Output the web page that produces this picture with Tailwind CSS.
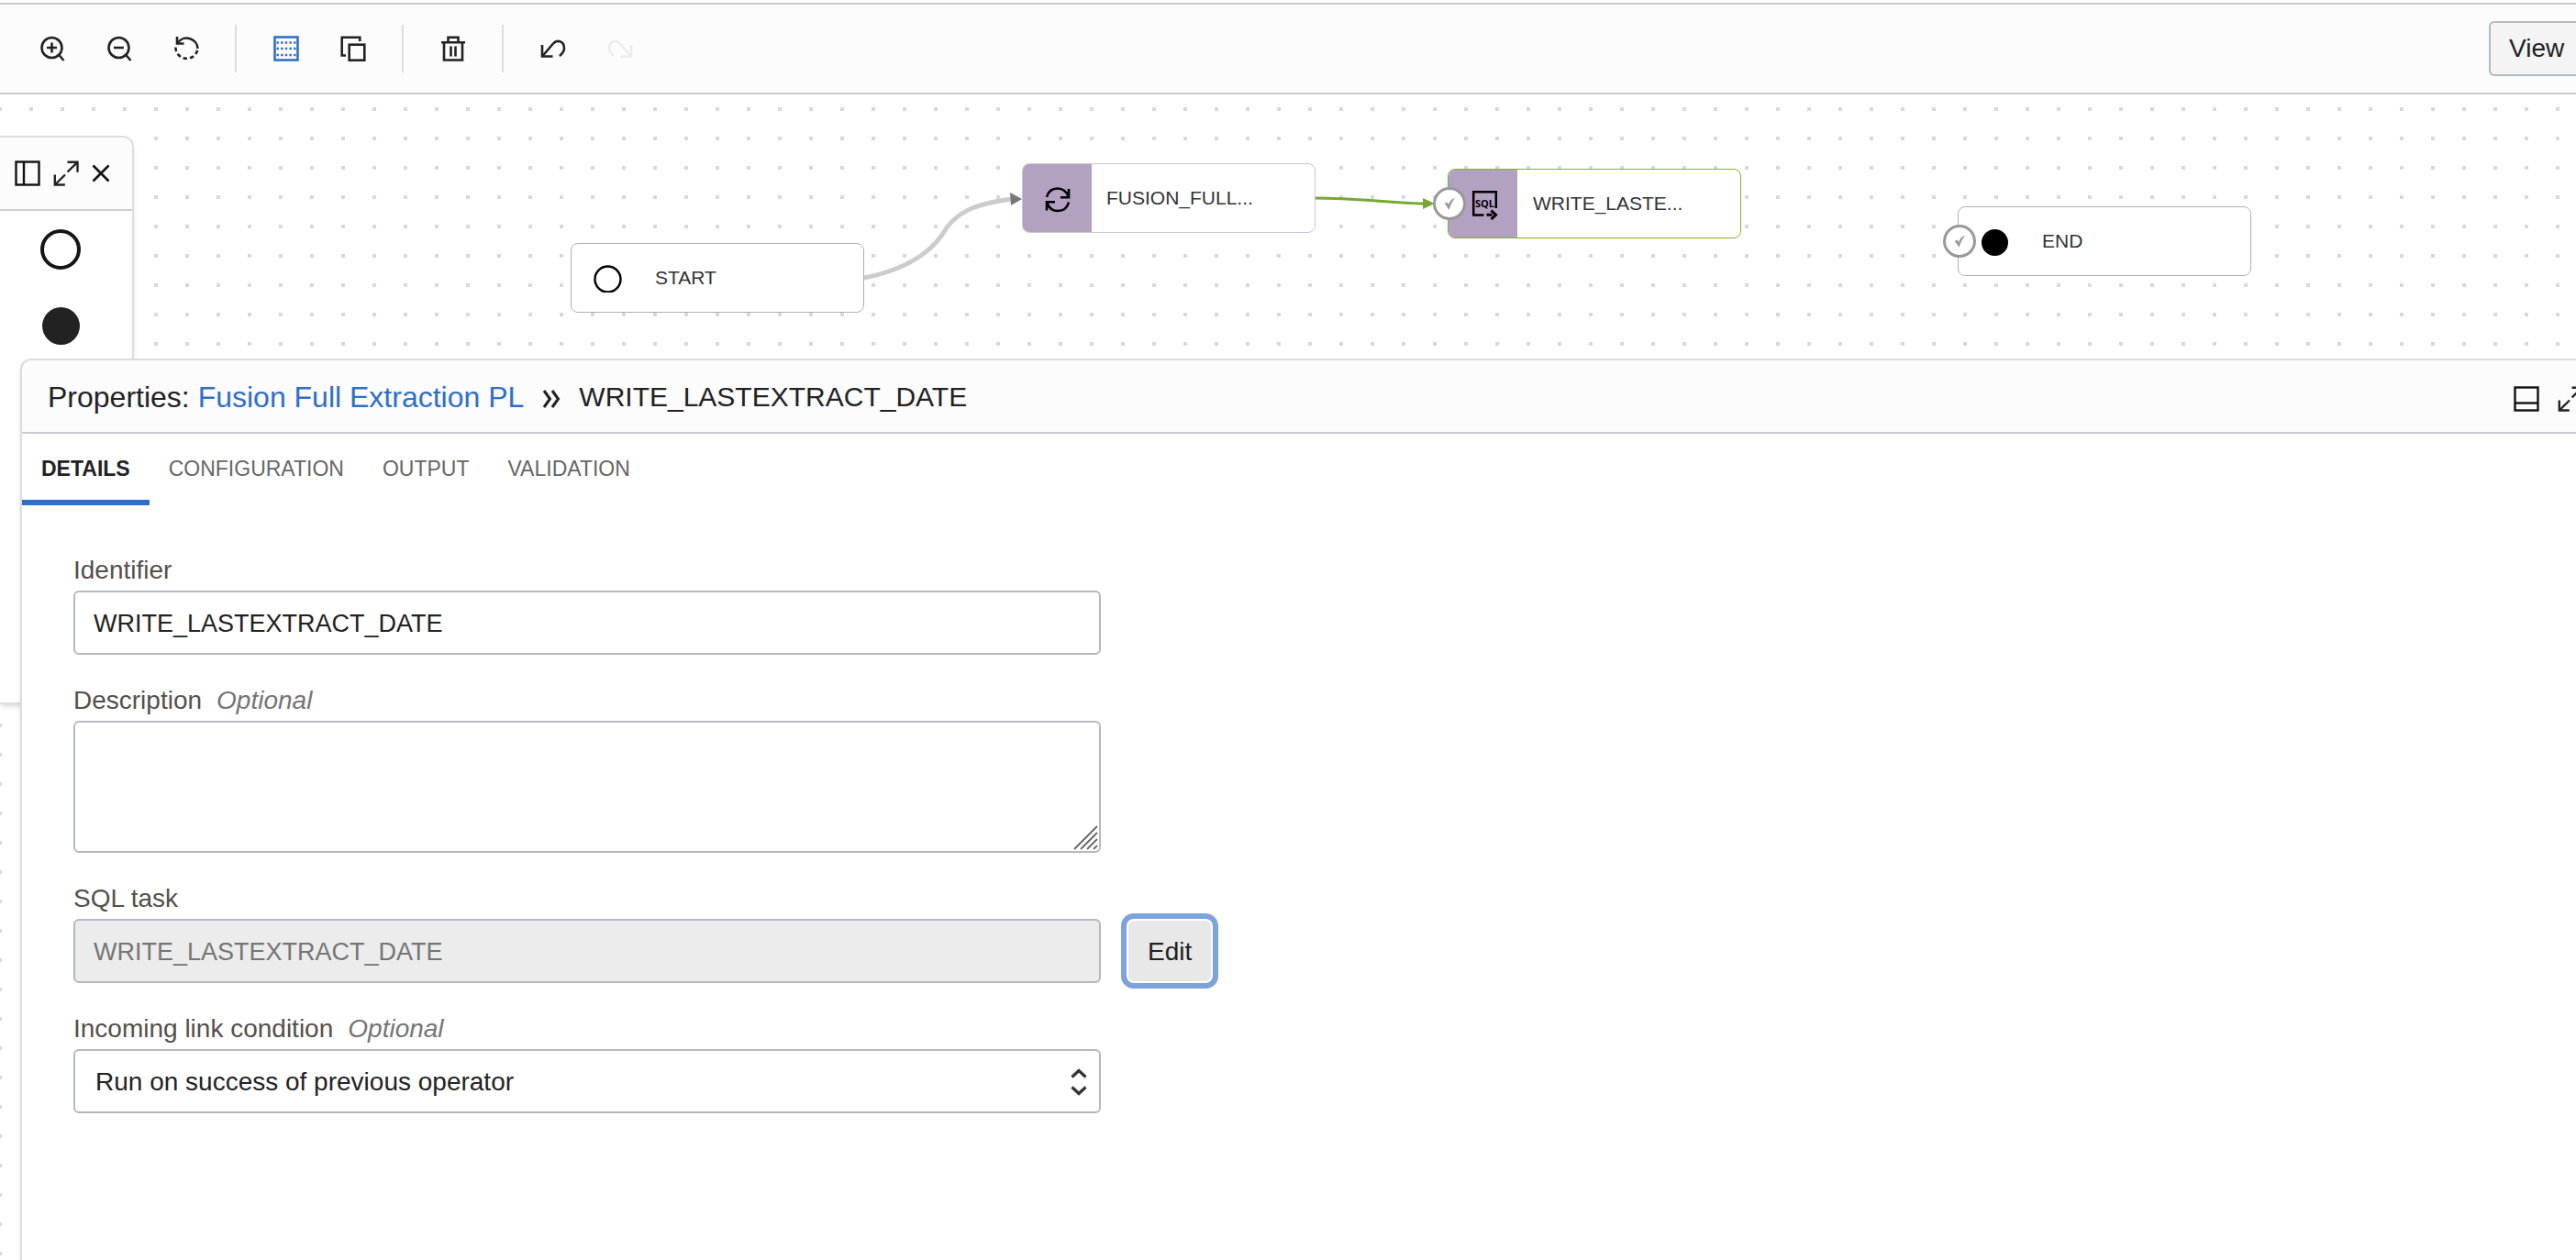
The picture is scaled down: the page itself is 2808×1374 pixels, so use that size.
<!DOCTYPE html>
<html lang="en">
<head>
<meta charset="utf-8">
<meta name="viewport" content="width=device-width, initial-scale=1">
<title>Pipeline designer</title>
<script src="https://cdn.jsdelivr.net/npm/@tailwindcss/browser@4"></script>
</head>
<body class="flex min-h-screen flex-col overflow-x-hidden bg-white pt-[3px] font-['Liberation_Sans',Arial,sans-serif] text-[#222]">

<!-- Toolbar -->
<header class="flex h-[100px] shrink-0 items-center justify-between border-y-2 border-[#ccc] bg-[#fcfcfc] pl-5">
  <div class="flex items-center" role="toolbar" aria-label="Canvas tools">
    <button class="flex w-[73px] justify-center" aria-label="Zoom in">
      <svg class="size-7" viewBox="0 0 28 28" fill="none" stroke="#222" stroke-width="2.6"><circle cx="13.500" cy="13" r="11"/><path d="M13.500 7.500v11M8 13h11M21 20.500l5.500 6.500"/></svg>
    </button>
    <button class="flex w-[73px] justify-center" aria-label="Zoom out">
      <svg class="size-7" viewBox="0 0 28 28" fill="none" stroke="#222" stroke-width="2.6"><circle cx="13.500" cy="13" r="11"/><path d="M8 13h11M21 20.500l5.500 6.500"/></svg>
    </button>
    <button class="flex w-[73px] justify-center" aria-label="Reset zoom">
      <svg class="size-7" viewBox="0 0 28 28" fill="none" stroke="#222" stroke-width="2.6"><path d="M4 1v7.500h7.500"/><path d="M4.500 8A12 12 0 0 1 26.500 14"/><path d="M26.500 14A12 12 0 1 1 2.500 11.500" stroke-dasharray="4.500 3" stroke-dashoffset="-2"/></svg>
    </button>
    <span class="mx-[17px] h-[52px] w-0.5 bg-[#d6dfe6]"></span>
    <button class="flex w-[73px] justify-center" aria-label="Toggle grid" aria-pressed="true">
      <svg class="size-7" viewBox="0 0 28 28" fill="none" stroke="#2f6fca" stroke-width="2.6"><rect x="1.500" y="1.500" width="25" height="25"/><path d="M3.500 7.500h21M3.500 14h21M3.500 21h21" stroke-dasharray="2.400 2.250" stroke-width="2.400"/></svg>
    </button>
    <button class="flex w-[73px] justify-center" aria-label="Duplicate">
      <svg class="size-7" viewBox="0 0 28 28" fill="none" stroke="#222" stroke-width="2.6"><path d="M6 21.500H1.700V1.700h19.600V6"/><rect x="9.700" y="9.700" width="16.600" height="17"/></svg>
    </button>
    <span class="mx-[17px] h-[52px] w-0.5 bg-[#d6dfe6]"></span>
    <button class="flex w-[73px] justify-center" aria-label="Delete">
      <svg class="size-7" viewBox="0 0 28 28" fill="none" stroke="#222" stroke-width="2.6"><path d="M1 7.200h26M8.500 7V1.700h11V7M4 7v19.500h20V7M11.500 11.500v11M16.500 11.500v11"/></svg>
    </button>
    <span class="mx-[17px] h-[52px] w-0.5 bg-[#d6dfe6]"></span>
    <button class="flex w-[73px] justify-center" aria-label="Undo">
      <svg class="size-7" viewBox="0 0 28 28" fill="none" stroke="#222" stroke-width="2.6"><path d="M2 10v12.500h11.500"/><path d="M2.500 22L14 8.500C18 4 26 5.500 26 13.500C26 17 24 19.500 21 22"/></svg>
    </button>
    <button class="flex w-[73px] justify-center" aria-label="Redo" disabled>
      <svg class="size-7" viewBox="0 0 28 28" fill="none" stroke="#ececec" stroke-width="2.6"><path d="M26 10v12.500H14.500"/><path d="M25.500 22L14 8.500C10 4 2 5.500 2 13.500C2 17 4 19.500 7 22"/></svg>
    </button>
  </div>
  <button class="h-[60px] w-[95px] rounded-l-md border-y-2 border-l-2 border-[#b3bac2] bg-[#f4f4f4] pl-5 text-left text-[28px] leading-9">View</button>
</header>

<main class="relative flex flex-1 flex-col overflow-hidden pt-[288px] pl-[22px]">

  <!-- Grid and links -->
  <svg class="absolute inset-0 size-full" fill="none" aria-hidden="true">
    <defs>
      <pattern id="dots" x="-2" y="14" width="34" height="32" patternUnits="userSpaceOnUse"><rect width="4" height="4" fill="#d9d9d9"/></pattern>
    </defs>
    <rect width="100%" height="100%" fill="url(#dots)"/>
    <path d="M942 200C982 192 1010 177 1027 153C1040 129 1062 119 1104 114" stroke="#ccc" stroke-width="5"/>
    <path d="M1101 107l13 7l-12 7z" fill="#777"/>
    <path d="M1434 113C1480 113 1510 118 1554 119" stroke="#76a832" stroke-width="3"/>
    <path d="M1551 113l13 6l-13 6z" fill="#76a832"/>
  </svg>

  <!-- Nodes -->
  <div class="absolute top-[162px] left-[622px] flex h-[76px] w-[320px] items-center rounded-lg border border-[#b0b0b0] bg-white text-[21px] leading-7 text-[#333]">
    <span class="flex w-[91px] pl-6"><svg class="size-8" viewBox="0 0 32 32" fill="none"><circle cx="15.500" cy="17.500" r="14" stroke="#000" stroke-width="2.400"/></svg></span>
    <span>START</span>
  </div>

  <div class="absolute top-[75px] left-[1114px] flex h-[76px] w-[320px] items-center overflow-hidden rounded-lg border border-[#cfc3da] bg-white text-[21px] leading-7 text-[#333]">
    <span class="mr-4 flex h-full w-[75px] items-center justify-center bg-[#b2a1c1]">
      <svg class="size-8" viewBox="0 0 32 32" fill="none" stroke="#000" stroke-width="2.600"><path d="M4 15C5.500 9 10 5.500 16 5.500C21 5.500 25.500 9 27.500 14M28 6v9.300h-9"/><path d="M28 20.500C26.500 26.500 22 30 16 30C11 30 6.500 27 4.500 21.500M4 29.500v-9.300h9"/></svg>
    </span>
    <span>FUSION_FULL...</span>
  </div>

  <div class="absolute top-[81px] left-[1578px] flex h-[76px] w-[320px] items-center rounded-lg border border-[#7fb135] bg-white text-[21px] leading-7 text-[#333]">
    <span class="mr-[17px] flex h-full w-[75px] items-center rounded-l-[7px] bg-[#b2a1c1] pl-[22px]">
      <svg class="size-9" viewBox="0 0 36 36" fill="none"><path d="M16.500 30.500H5.200V5.200h24.600V23" stroke="#000" stroke-width="2.500"/><path d="M19.500 30.300h6M24.500 25.500l5 4.800l-5 4.800" stroke="#000" stroke-width="3"/><text x="17.500" y="21.500" text-anchor="middle" font-family="Open Sans, sans-serif" font-weight="700" font-size="11" fill="#000">SQL</text></svg>
    </span>
    <span>WRITE_LASTE...</span>
    <svg class="absolute top-[19px] -left-[17px] size-9" viewBox="0 0 36 36"><circle cx="18" cy="18" r="16.500" fill="#fff" stroke="#999" stroke-width="3"/><path d="M12.500 18l3-1.500l1.500 2.500C18.500 15 20.500 12.500 24 12c-3 3.500-4.500 7-6.500 13c-1.500-3-3-5-5-7z" fill="#999"/></svg>
  </div>

  <div class="absolute top-[122px] left-[2134px] flex h-[76px] w-[320px] items-center rounded-lg border border-[#b0b0b0] bg-white text-[21px] leading-7 text-[#333]">
    <span class="flex w-[91px] pl-6"><svg class="size-8" viewBox="0 0 32 32"><circle cx="15.500" cy="17.500" r="14.500" fill="#000"/></svg></span>
    <span>END</span>
    <svg class="absolute top-[19px] -left-[17px] size-9" viewBox="0 0 36 36"><circle cx="18" cy="18" r="16.500" fill="#fff" stroke="#999" stroke-width="3"/><path d="M12.500 18l3-1.500l1.500 2.500C18.500 15 20.500 12.500 24 12c-3 3.500-4.500 7-6.500 13c-1.500-3-3-5-5-7z" fill="#999"/></svg>
  </div>

  <!-- Operators palette -->
  <aside class="absolute top-[45px] left-0 h-[620px] w-[146px] rounded-tr-xl border-y-2 border-r-2 border-[#ddd] bg-white shadow-md" aria-label="Operators">
    <div class="flex h-20 items-center gap-3.5 rounded-tr-xl border-b-2 border-[#cdd0d4] bg-[#fcfcfc] pl-4">
      <button aria-label="Dock left"><svg class="size-7" viewBox="0 0 28 28" fill="none" stroke="#111" stroke-width="2.400"><rect x="1.500" y="1.500" width="25" height="25"/><path d="M10 2v24"/></svg></button>
      <button aria-label="Expand"><svg class="size-7" viewBox="0 0 28 28" fill="none" stroke="#222" stroke-width="2.400"><path d="M15.500 1.800h11v11M26 2.300L15.500 12.500M1.800 15.500v11h11M2.300 26L13 15.500"/></svg></button>
      <button aria-label="Close"><svg class="size-5" viewBox="0 0 20 20" fill="none" stroke="#111" stroke-width="2.600"><path d="M1.500 1.500l17 17M18.500 1.500l-17 17"/></svg></button>
    </div>
    <div class="flex flex-col items-center gap-[41px] pt-5 pr-3">
      <svg class="size-11" viewBox="0 0 44 44"><circle cx="22" cy="22" r="20" fill="none" stroke="#161513" stroke-width="4"/></svg>
      <svg class="size-[41px]" viewBox="0 0 41 41"><circle cx="20.500" cy="20.500" r="20.500" fill="#222"/></svg>
    </div>
  </aside>

  <!-- Properties panel -->
  <section class="relative flex flex-1 flex-col rounded-tl-xl border-t-2 border-l-2 border-[#ddd] bg-white shadow-md">
    <div class="flex h-20 items-center rounded-tl-xl border-b-2 border-[#c8cdd2] bg-[#fcfcfc] pl-7">
      <h1 class="flex items-center pt-0.5 text-[32px] leading-10 whitespace-pre">Properties: <a href="#" class="text-[#2f6fca]">Fusion Full Extraction PL</a><svg class="mt-1 mr-5 ml-5 size-5" viewBox="0 0 20 20" fill="none" stroke="#222" stroke-width="3"><path d="M2 1l6.500 9L2 19M11 1l6.500 9L11 19"/></svg><span class="text-[30px]">WRITE_LASTEXTRACT_DATE</span></h1>
      <div class="-mr-2 ml-auto flex gap-5 pt-1.5">
        <button aria-label="Dock bottom"><svg class="size-7" viewBox="0 0 28 28" fill="none" stroke="#111" stroke-width="2.400"><rect x="1.500" y="1.500" width="25" height="25"/><path d="M1.500 18.500h25"/></svg></button>
        <button aria-label="Expand"><svg class="size-7" viewBox="0 0 28 28" fill="none" stroke="#222" stroke-width="2.400"><path d="M15.500 1.800h11v11M26 2.300L15.500 12.500M1.800 15.500v11h11M2.300 26L13 15.500"/></svg></button>
      </div>
    </div>

    <nav class="flex h-[78px] text-[23px] text-[#666]" role="tablist">
      <button role="tab" aria-selected="true" class="border-b-6 border-[#2f6fca] px-[21px] pt-1 font-bold text-[#222]">DETAILS</button>
      <button role="tab" aria-selected="false" class="border-b-6 border-transparent px-[21px] pt-1">CONFIGURATION</button>
      <button role="tab" aria-selected="false" class="border-b-6 border-transparent px-[21px] pt-1">OUTPUT</button>
      <button role="tab" aria-selected="false" class="border-b-6 border-transparent px-[21px] pt-1">VALIDATION</button>
    </nav>

    <form class="flex flex-col gap-8 pt-[53px] pb-12 pl-14 text-[28px] leading-9">
      <div class="flex w-[1120px] flex-col gap-1">
        <label for="identifier" class="text-[#55504b]">Identifier</label>
        <input id="identifier" type="text" value="WRITE_LASTEXTRACT_DATE" class="h-[70px] w-full rounded-md border-2 border-[#b4b9c0] bg-white px-5 pt-0.5 text-[27px]">
      </div>
      <div class="flex w-[1120px] flex-col gap-1">
        <label for="description" class="text-[#55504b]">Description<i class="ml-4 text-[#757575]">Optional</i></label>
        <div class="relative flex">
          <textarea id="description" class="h-36 w-full resize-none rounded-md border-2 border-[#b4b9c0] bg-white px-5 py-3"></textarea>
          <svg class="pointer-events-none absolute right-[3px] bottom-[3px] size-7" viewBox="0 0 28 28" stroke="#666" stroke-width="1.800"><path d="M2 27L27 2M9 27L27 9M16 27L27 16M23 27l4-4"/></svg>
        </div>
      </div>
      <div class="flex flex-col gap-1">
        <label for="task" class="text-[#55504b]">SQL task</label>
        <div class="flex items-center gap-[30px]">
          <input id="task" type="text" value="WRITE_LASTEXTRACT_DATE" disabled class="h-[70px] w-[1120px] rounded-md border-2 border-[#b4b9c0] bg-[#ececec] px-5 pt-0.5 text-[27px] text-[#757575]">
          <button type="button" class="h-[66px] rounded-md bg-[#e8e8e8] px-[21px] pt-0.5 ring-6 ring-[#7ca3dc] ring-offset-2 ring-offset-white">Edit</button>
        </div>
      </div>
      <div class="flex w-[1120px] flex-col gap-1">
        <label for="condition" class="text-[#55504b]">Incoming link condition<i class="ml-4 text-[#757575]">Optional</i></label>
        <div class="relative flex">
          <select id="condition" class="h-[70px] w-full appearance-none rounded-md border-2 border-[#b4b9c0] bg-white px-[22px] pt-0.5">
            <option>Run on success of previous operator</option>
          </select>
          <svg class="pointer-events-none absolute top-5 right-[14px] h-8 w-5" viewBox="0 0 20 32" fill="none" stroke="#333" stroke-width="3.200"><path d="M2.500 10.500L10 3.500l7.500 7M2.500 21.500l7.500 7l7.500-7"/></svg>
        </div>
      </div>
    </form>
  </section>
</main>
</body>
</html>
